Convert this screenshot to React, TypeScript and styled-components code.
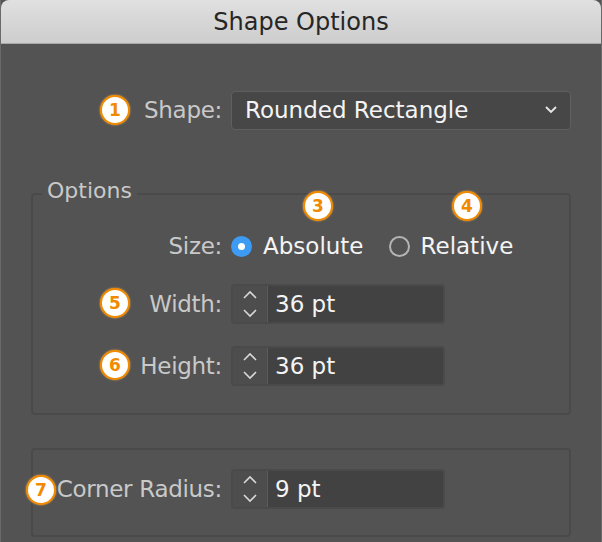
import React from "react";
import styled, { createGlobalStyle } from "styled-components";

const Global = createGlobalStyle`
  html, body { margin: 0; padding: 0; background: #535353; }
  body { font-family: "DejaVu Sans", "Open Sans", sans-serif; }
`;

const Window = styled.div`
  position: relative;
  width: 602px;
  height: 542px;
  background: #535353;
  overflow: hidden;
  box-sizing: border-box;
  border-left: 1px solid #6a6a6a;
  border-right: 1px solid #6a6a6a;
`;

const TitleBar = styled.div`
  height: 44px;
  background: linear-gradient(#e0e0e0, #cdcdcd);
  border-bottom: 1px solid #a8a8a8;
  box-sizing: border-box;
  display: flex;
  align-items: center;
  justify-content: center;
  font-size: 24px;
  color: #262626;
  border-radius: 8px 8px 0 0;
`;

const Body = styled.div`
  padding: 0 30px;
  display: flex;
  flex-direction: column;
`;

const Row = styled.div<{ $top: number; $w: number }>`
  display: flex;
  align-items: center;
  gap: 9px;
  height: 40px;
  margin-top: ${(p) => p.$top}px;
  & > label {
    width: ${(p) => p.$w}px;
  }
`;

const Label = styled.label`
  flex: none;
  text-align: right;
  font-size: 23px;
  letter-spacing: -0.3px;
  color: #c9c9c9;
  white-space: nowrap;
`;

const Dropdown = styled.div`
  width: 340px;
  height: 39px;
  box-sizing: border-box;
  background: #474747;
  border: 1px solid #5f5f5f;
  border-radius: 4px;
  display: flex;
  align-items: center;
  justify-content: space-between;
  padding: 0 12px 0 13px;
  font-size: 23px;
  color: #f4f4f4;
`;

const Group = styled.div<{ $top: number; $h: number; $pad: number }>`
  position: relative;
  margin-top: ${(p) => p.$top}px;
  height: ${(p) => p.$h}px;
  box-sizing: border-box;
  border: 2px solid #4a4a4a;
  border-radius: 4px;
  padding-top: ${(p) => p.$pad}px;
`;

const Legend = styled.span`
  position: absolute;
  top: -17px;
  left: 9px;
  padding: 0 5px;
  background: #535353;
  font-size: 22px;
  color: #c9c9c9;
`;

const Radio = styled.span<{ $on?: boolean }>`
  width: 21px;
  height: 21px;
  border-radius: 50%;
  box-sizing: border-box;
  display: inline-flex;
  align-items: center;
  justify-content: center;
  background: ${(p) => (p.$on ? "#3d9bf3" : "transparent")};
  border: ${(p) => (p.$on ? "none" : "2px solid #b4b4b4")};
  &::after {
    content: "";
    width: 7px;
    height: 7px;
    border-radius: 50%;
    background: ${(p) => (p.$on ? "#fff" : "transparent")};
  }
`;

const RadioText = styled.span<{ $gap: number }>`
  font-size: 23px;
  color: #f4f4f4;
  margin-left: 2px;
  margin-right: ${(p) => p.$gap}px;
`;

const Field = styled.div`
  width: 214px;
  height: 40px;
  box-sizing: border-box;
  display: flex;
  border: 2px solid #4a4a4a;
  border-radius: 4px;
  overflow: hidden;
`;

const Stepper = styled.div`
  width: 34px;
  border-right: 1px solid #5b5b5b;
  background: #4d4d4d;
  display: flex;
  align-items: center;
  justify-content: center;
`;

const Value = styled.div`
  flex: 1;
  background: #424242;
  display: flex;
  align-items: center;
  padding-left: 7px;
  font-size: 23px;
  color: #f4f4f4;
`;

const Badge = styled.span<{ $x: number; $y: number }>`
  position: absolute;
  left: ${(p) => p.$x - 15}px;
  top: ${(p) => p.$y - 15}px;
  width: 30px;
  height: 30px;
  box-sizing: border-box;
  border-radius: 50%;
  background: #fff;
  border: 2px solid #f08a00;
  box-shadow: 0 0 2px #f5a94a;
  display: flex;
  align-items: center;
  justify-content: center;
  font: bold 17px "DejaVu Sans", sans-serif;
  color: #f08a00;
`;

const Steps = () => (
  <svg width="16" height="30" viewBox="0 0 16 30" fill="none" stroke="#d8d8d8" strokeWidth="1.6">
    <path d="M2 9 L8 3 L14 9" />
    <path d="M2 21 L8 27 L14 21" />
  </svg>
);

const NumField = ({ v }: { v: string }) => (
  <Field>
    <Stepper>
      <Steps />
    </Stepper>
    <Value>{v}</Value>
  </Field>
);

export default function App() {
  return (
    <>
      <Global />
      <Window>
        <TitleBar>Shape Options</TitleBar>
        <Body>
          <Row $top={46} $w={191}>
            <Label>Shape:</Label>
            <Dropdown>
              Rounded Rectangle
              <svg width="14" height="10" viewBox="0 0 14 10" fill="none" stroke="#e8e8e8" strokeWidth="1.8">
                <path d="M2 2 L7 7 L12 2" />
              </svg>
            </Dropdown>
          </Row>
          <Group $top={63} $h={222} $pad={31}>
            <Legend>Options</Legend>
            <Row $top={0} $w={189}>
              <Label>Size:</Label>
              <Radio $on />
              <RadioText $gap={16}>Absolute</RadioText>
              <Radio />
              <RadioText $gap={0}>Relative</RadioText>
            </Row>
            <Row $top={18} $w={189}>
              <Label>Width:</Label>
              <NumField v="36 pt" />
            </Row>
            <Row $top={22} $w={189}>
              <Label>Height:</Label>
              <NumField v="36 pt" />
            </Row>
          </Group>
          <Group $top={33} $h={89} $pad={19}>
            <Row $top={0} $w={189}>
              <Label>Corner Radius:</Label>
              <NumField v="9 pt" />
            </Row>
          </Group>
        </Body>
        <Badge $x={114} $y={110}>1</Badge>
        <Badge $x={317} $y={206}>3</Badge>
        <Badge $x={466} $y={206}>4</Badge>
        <Badge $x={114} $y={303}>5</Badge>
        <Badge $x={114} $y={365}>6</Badge>
        <Badge $x={40} $y={490}>7</Badge>
      </Window>
    </>
  );
}
